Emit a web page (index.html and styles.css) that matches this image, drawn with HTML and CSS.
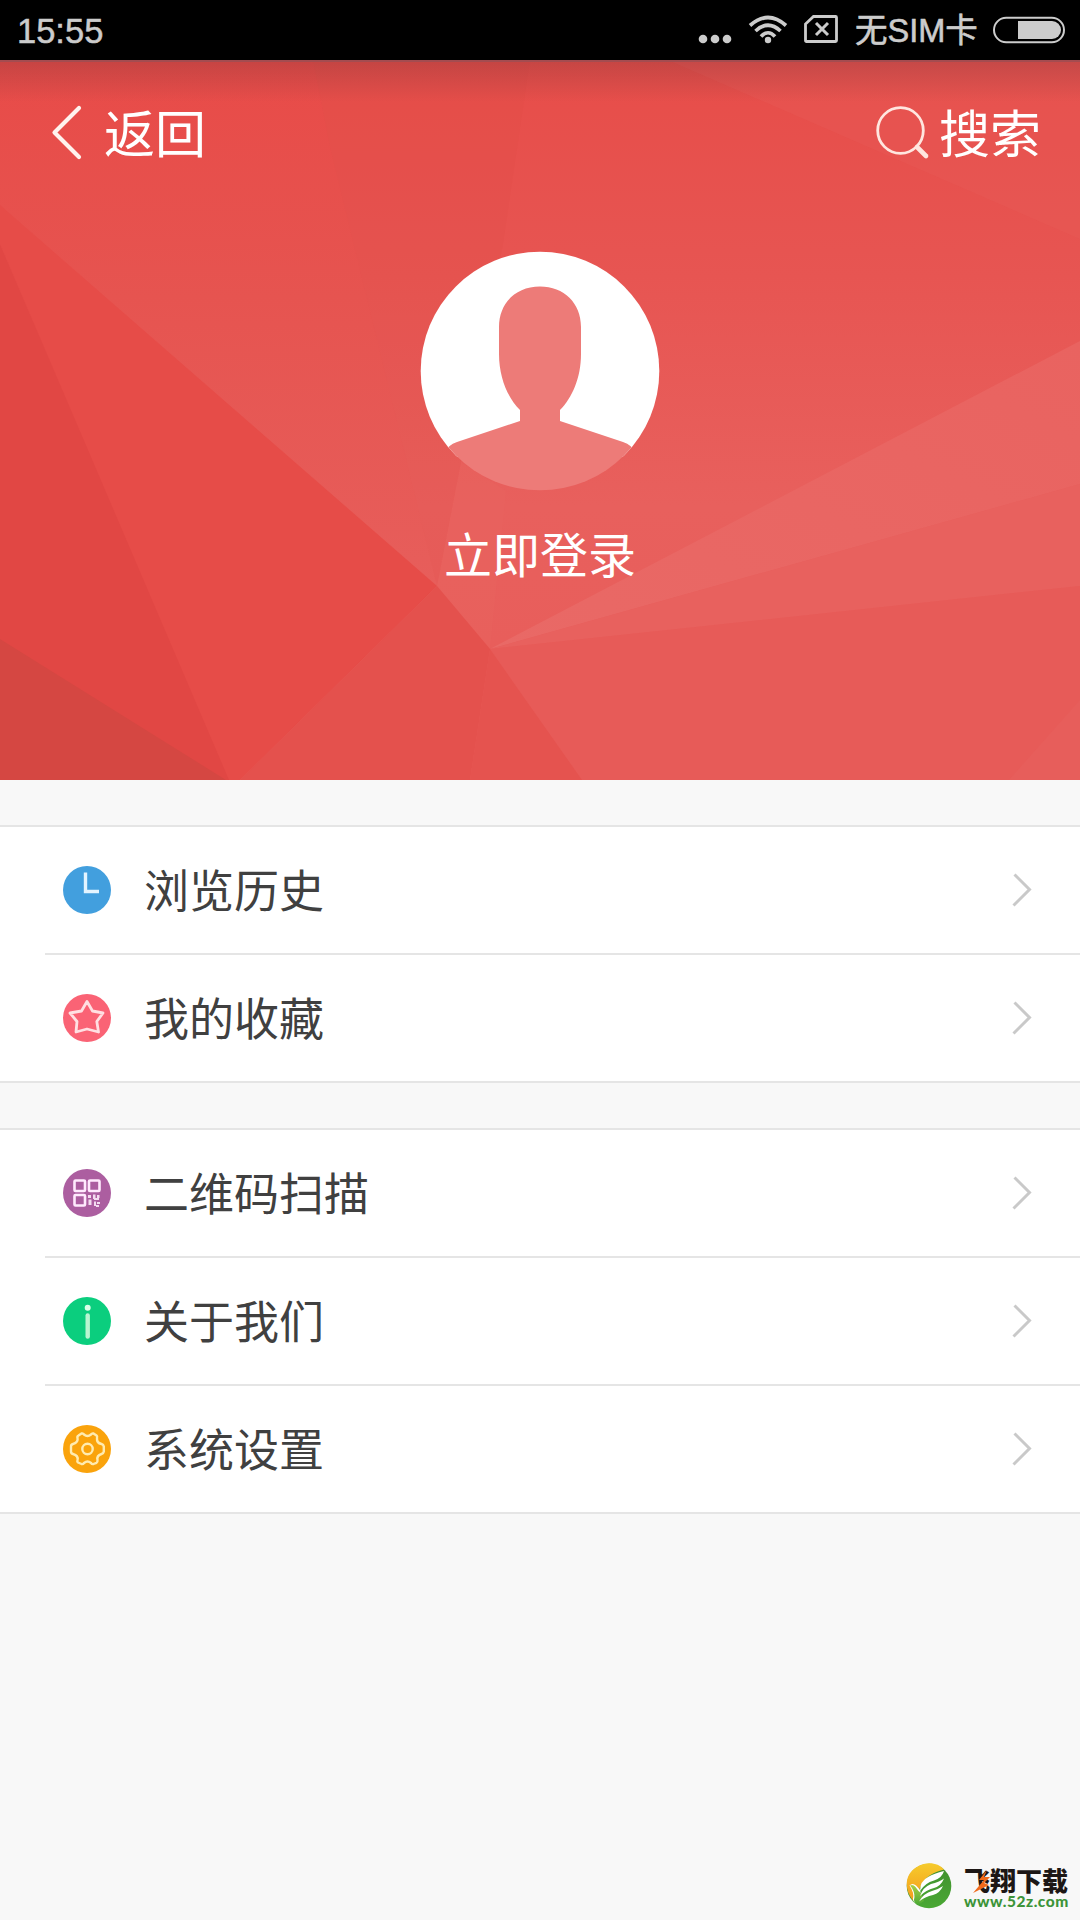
FILE: index.html
```html
<!DOCTYPE html>
<html lang="zh-CN">
<head>
<meta charset="utf-8">
<title>个人中心</title>
<link rel="stylesheet" href="styles.css">
</head>
<body>
<div class="screen">
  <div class="status">
    <span class="clock">15:55</span>
    <svg class="dots" width="34" height="60" viewBox="0 0 34 60"><g fill="#ccc"><circle cx="5" cy="39" r="4.300"/><circle cx="17" cy="39" r="4.300"/><circle cx="29" cy="39" r="4.300"/></g></svg>
    <svg class="wifi" width="40" height="60" viewBox="0 0 40 60"><g fill="none" stroke="#ccc" stroke-width="3.700"><path d="M2 25.500Q20 9.500 38 25.500"/><path d="M7.500 31Q20 19.500 32.500 31"/><path d="M13 36.500Q20 29 27 36.500"/></g><circle cx="20" cy="40" r="3.200" fill="#ccc"/></svg>
    <svg class="sim" width="34" height="60" viewBox="0 0 34 60"><path d="M9.500 16.500H31.500Q32.500 16.500 32.500 17.500V40.500Q32.500 41.500 31.500 41.500H2.500Q1.500 41.500 1.500 40.500V24Z" fill="none" stroke="#ccc" stroke-width="2.800"/><path d="M12 23L24 35M24 23L12 35" stroke="#ccc" stroke-width="3"/></svg>
    <span class="carrier">无SIM卡</span>
    <svg class="battery" width="72" height="60" viewBox="0 0 72 60"><rect x="1" y="17.800" width="70" height="24.400" rx="12.200" fill="none" stroke="#ccc" stroke-width="2"/><path d="M25 21H59A9 9 0 0 1 59 39H25Z" fill="#ccc"/></svg>
  </div>

  <header class="hero">
    <svg class="facets" width="1080" height="720" viewBox="0 60 1080 720">
      <defs>
        <linearGradient id="base" x1="0" y1="0" x2="0" y2="1"><stop offset="0" stop-color="#e74d49"/><stop offset=".3" stop-color="#e75552"/><stop offset=".62" stop-color="#e8605d"/><stop offset="1" stop-color="#e85c59"/></linearGradient>
        <linearGradient id="left" x1="0" y1="0" x2="0" y2="1"><stop offset="0" stop-color="#e84b48"/><stop offset=".45" stop-color="#e65450"/><stop offset="1" stop-color="#e75e5b"/></linearGradient>
        <linearGradient id="ray" x1="1" y1="0" x2="0" y2="1"><stop offset="0" stop-color="#e96360"/><stop offset="1" stop-color="#e96966"/></linearGradient>
        <linearGradient id="shade" x1="0" y1="0" x2="0" y2="1"><stop offset="0" stop-color="#5d3033" stop-opacity=".25"/><stop offset="1" stop-color="#5d3033" stop-opacity="0"/></linearGradient>
      </defs>
      <rect y="60" width="1080" height="720" fill="url(#base)"/>
      <path d="M0 60H313L330 147L437 586L0 205Z" fill="url(#left)"/>
      <path d="M313 60H530L503 244L437 586L330 147Z" fill="#df4744" opacity=".15"/>
      <path d="M668 60H1080V239Z" fill="#e95c59" opacity=".3"/>
      <path d="M461 462L437 586L490 649L506 491Z" fill="#ea6966" opacity=".2"/>
      <path d="M490 649L1080 341V484Z" fill="url(#ray)"/>
      <path d="M490 649L1080 484V586Z" fill="#e8615e"/>
      <path d="M490 649L1080 586V780H582Z" fill="#e75b58"/>
      <path d="M1080 700V780H1009Z" fill="#e75e5b"/>
      <path d="M0 205L437 586L240 780H227L0 244Z" fill="#e64c48"/>
      <path d="M0 244L229 780H0Z" fill="#e14744"/>
      <path d="M0 639L226 780H0Z" fill="#d54742"/>
      <path d="M437 586L490 649L470 780H240Z" fill="#e4514d"/>
      <path d="M490 649L582 780H470Z" fill="#e5534f"/>
      <rect y="60" width="1080" height="42" fill="url(#shade)"/>
      <rect y="60" width="1080" height="2" fill="#a44c50"/>
    </svg>
    <nav class="nav">
      <a class="back"><svg width="32" height="56" viewBox="0 0 32 56"><path d="M29 3L4.500 27.500L29 52" fill="none" stroke="#fff3ee" stroke-width="4.200" stroke-linecap="round" stroke-linejoin="round"/></svg><span>返回</span></a>
      <a class="search"><svg width="54" height="54" viewBox="0 0 54 54"><circle cx="24.500" cy="24.500" r="22.800" fill="none" stroke="#ffe6df" stroke-width="2.800"/><path d="M41 41L50 50" stroke="#ffe6df" stroke-width="4.600" stroke-linecap="round"/></svg><span>搜索</span></a>
    </nav>
    <div class="profile">
      <svg width="240" height="240" viewBox="0 0 240 240">
        <defs><clipPath id="disc"><circle cx="120" cy="120" r="119.300"/></clipPath></defs>
        <g clip-path="url(#disc)"><path d="M0 0H240V206H0Z" fill="#fff"/><path d="M120 35.500C144 35.500 161 52 161 76V103C161 127 152 147 140 159V170L203 191Q212 194 216 202L240 206V240H0V206L24 202Q28 194 37 191L100 170V159C88 147 79 127 79 103V76C79 52 96 35.500 120 35.500Z" fill="#ed7b78"/></g>
      </svg>
      <span class="login">立即登录</span>
    </div>
  </header>

  <main class="menu">
    <section class="group">
      <div class="row"><svg class="icon" viewBox="0 0 48 48"><circle cx="24" cy="24" r="24" fill="#429fde"/><path d="M22.500 6.500V25.500H36" fill="none" stroke="#e3f4ff" stroke-width="3.400"/></svg><span class="label">浏览历史</span><svg class="chevron" viewBox="0 0 20 34"><path d="M2.500 1.500L17.500 16.500L1.500 32.500"/></svg></div>
      <div class="row"><svg class="icon" viewBox="0 0 48 48"><circle cx="24" cy="24" r="24" fill="#fa6375"/><path d="M24 7.500L29.500 17L40 19L33.800 27.500L35.500 38L24 35L13 38L14 27.500L7 19L18.500 17Z" fill="none" stroke="#ffdfe2" stroke-width="2.800" stroke-linejoin="round"/></svg><span class="label">我的收藏</span><svg class="chevron" viewBox="0 0 20 34"><path d="M2.500 1.500L17.500 16.500L1.500 32.500"/></svg></div>
    </section>
    <section class="group">
      <div class="row"><svg class="icon" viewBox="0 0 48 48"><circle cx="24" cy="24" r="24" fill="#ac5ea0"/><g fill="none" stroke="#ffeafd" stroke-width="2.600"><rect x="11.500" y="11.500" width="10.500" height="10.500" rx="1"/><rect x="26" y="11.500" width="10.500" height="10.500" rx="1"/><rect x="11.500" y="26" width="10.500" height="10.500" rx="1"/></g><path d="M25 26H28V29H25ZM30 25.500H32.500V30H30ZM34 26H36.500V29H34ZM31 29H36V31H31ZM25.500 30.500H28.500V36H25.500ZM31 32.500H33V37H31ZM34 33H37V35H34ZM33 36H36V38H33Z" fill="#f3dcf0"/></svg><span class="label">二维码扫描</span><svg class="chevron" viewBox="0 0 20 34"><path d="M2.500 1.500L17.500 16.500L1.500 32.500"/></svg></div>
      <div class="row"><svg class="icon" viewBox="0 0 48 48"><circle cx="24" cy="24" r="24" fill="#0bce7e"/><circle cx="24.700" cy="10.700" r="3" fill="#dcffe9"/><path d="M24.700 18.500V39.500" stroke="#b9f5d1" stroke-width="4.400" stroke-linecap="round"/></svg><span class="label">关于我们</span><svg class="chevron" viewBox="0 0 20 34"><path d="M2.500 1.500L17.500 16.500L1.500 32.500"/></svg></div>
      <div class="row"><svg class="icon" viewBox="0 0 48 48"><circle cx="24" cy="24" r="24" fill="#faa30c"/><g fill="none" stroke="#ffebb0" stroke-width="2.400" stroke-linejoin="round"><path d="M18.500 8.500Q20 8 21 9.500Q24.500 12.500 28 9.500Q29 8 30.500 8.500L33.500 10.500Q34.500 11.300 34 13Q33.500 18 38.500 19Q40.500 19.500 40.800 21.500V26.500Q40.500 28.500 38.500 29Q33.500 30.500 34.500 35Q34.800 37 33.500 37.800L30.500 39Q29 39.500 28 38Q24.500 35 21 38Q20 39.500 18.500 39L15 37.500Q14 36.500 14.500 35Q15.500 30.500 10 29Q8 28.500 8 26.500V21.500Q8 19.500 10 19Q15.500 17.500 14.500 13Q14 11.300 15.500 10.500Z"/><circle cx="24.500" cy="24" r="5.200"/></g></svg><span class="label">系统设置</span><svg class="chevron" viewBox="0 0 20 34"><path d="M2.500 1.500L17.500 16.500L1.500 32.500"/></svg></div>
    </section>
  </main>

  <div class="brand">
    <svg width="46" height="46" viewBox="0 0 46 46">
      <defs><linearGradient id="leaf" x1="0" y1="0" x2="0" y2="1"><stop offset="0" stop-color="#3f8f2e"/><stop offset="1" stop-color="#4aa834"/></linearGradient><linearGradient id="sun" x1="0" y1="0" x2="0" y2="1"><stop offset="0" stop-color="#f6cb2c"/><stop offset="1" stop-color="#f49b1d"/></linearGradient><linearGradient id="bird" x1="0" y1="0" x2="0" y2="1"><stop offset="0" stop-color="#a5cf45"/><stop offset="1" stop-color="#4aa834"/></linearGradient></defs>
      <circle cx="23" cy="23" r="22.300" fill="url(#leaf)"/>
      <path d="M6 36C-2 26-1 11 10 4.500C20-2 32-.5 38 6.500C29 9 18 13 14 25L8 38Z" fill="url(#sun)"/>
      <path d="M3.500 22.500Q6.500 19.500 10 22.500Q12 24.500 14 27L16 36L11 41Q7 39 7 36Q8.500 30 3.500 22.500Z" fill="#fff"/>
      <path d="M4 22.500Q7 21 9.500 24Q12 28 15 30L18 38L12 42Q8 40 8 37Q9.500 31 6 25Z" fill="url(#bird)"/>
      <g fill="#fff"><path d="M14 28Q14 18 22 14Q28 10.500 38 8Q36 15 28 17.500Q19 20 14 28Z"/><path d="M14 33Q17 24 25 21Q33 19 38 15.500Q35 23 28 25Q20 27 14 33Z"/><path d="M13 38.500Q18 30 26 28Q32 26.500 37 23Q34 30 27 32Q19 33.500 13 38.500Z"/></g>
    </svg>
    <div class="brand-text"><span class="brand-name">飞翔下载</span><span class="brand-url">www.52z.com</span></div>
    <svg class="bolt" width="20" height="25" viewBox="0 0 20 25"><path d="M15 1L7 11H12L1 24L17 16L12 14L18 8H12Z" fill="#f06a1c"/></svg>
  </div>
</div>
</body>
</html>
```
FILE: styles.css
```css
* { box-sizing: border-box; }
body { margin: 0; background: #f8f8f8; font-family: "Noto Sans CJK SC", sans-serif; }
svg { display: block; flex: none; }
.screen { position: relative; width: 1080px; height: 1920px; background: #f8f8f8; overflow: hidden; }

.status { display: flex; align-items: center; height: 60px; padding: 0 15px 0 17px; background: #000; color: #ccc; font-family: "Liberation Sans", "Noto Sans CJK SC", sans-serif; }
.clock { flex: 1; padding-top: 2px; font-size: 34.500px; line-height: 58px; -webkit-text-stroke: .5px #ccc; }
.dots { margin-right: 16px; }
.wifi { margin-right: 16px; }
.sim { margin-right: 17px; }
.carrier { width: 124px; margin-right: 14px; padding-top: 2px; font-size: 32.500px; line-height: 58px; white-space: nowrap; -webkit-text-stroke: .6px #ccc; }

.hero { position: relative; height: 720px; color: #fff; }
.facets { position: absolute; inset: 0; }
.nav { position: relative; display: flex; justify-content: space-between; height: 146px; padding: 0 39px 0 50px; font-size: 51px; }
.nav a { display: flex; align-items: center; }
.nav span { line-height: 140px; padding-bottom: 4px; }
.back { gap: 22px; }
.search { gap: 9px; }
.profile { position: relative; display: flex; flex-direction: column; align-items: center; padding-top: 45px; }
.login { margin-top: 26px; font-size: 48px; line-height: 70px; }

.menu { display: flex; flex-direction: column; gap: 45px; padding-top: 45px; }
.group { border-top: 2px solid #e5e5e5; border-bottom: 2px solid #e5e5e5; background: #fff; padding-left: 45px; }
.row { display: flex; align-items: center; height: 126px; padding: 0 48px 0 18px; }
.row + .row { height: 128px; border-top: 2px solid #e5e5e5; }
.icon { width: 48px; height: 48px; margin-right: 33px; }
.label { flex: 1; padding-bottom: 3px; font-size: 45px; line-height: 66px; color: #404040; }
.chevron { width: 20px; height: 34px; fill: none; stroke: #c9c9c9; stroke-width: 3; }

.brand { position: absolute; left: 906px; top: 1863px; display: flex; gap: 12px; }
.brand-text { display: flex; flex-direction: column; padding-top: 3px; }
.brand-name { font-size: 26px; line-height: 27px; font-weight: 900; color: #1d1715; }
.brand-url { font-family: Lato, sans-serif; font-size: 15.500px; line-height: 16px; font-weight: 900; color: #3d9438; letter-spacing: .5px; }
.bolt { position: absolute; left: 66px; top: 6px; }
```
